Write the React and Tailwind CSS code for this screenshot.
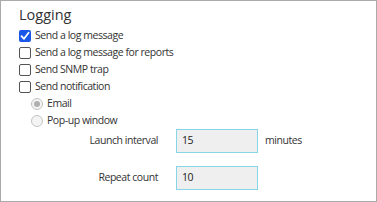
import React from "react";

function Checkbox({ checked }) {
  if (checked) {
    return (
      <span className="w-[12px] h-[12px] rounded-[2px] bg-[#1a56e8] flex items-center justify-center shrink-0">
        <svg width="10" height="10" viewBox="0 0 10 10">
          <path d="M1.5 5.2 L4 7.8 L8.6 1.8" fill="none" stroke="white" strokeWidth="1.8" strokeLinecap="round" strokeLinejoin="round" />
        </svg>
      </span>
    );
  }
  return <span className="w-[12px] h-[12px] rounded-[2px] border border-[#555] bg-white shrink-0" />;
}

function Radio({ checked }) {
  return (
    <span className="w-[12px] h-[12px] rounded-full border border-[#c4c4c4] bg-[#f4f4f4] flex items-center justify-center shrink-0">
      {checked && <span className="w-[6px] h-[6px] rounded-full bg-[#b0b0b0]" />}
    </span>
  );
}

export default function App() {
  const font = { fontFamily: '"Open Sans", "Liberation Sans", sans-serif' };
  return (
    <div
      className="w-[377px] h-[202px] border border-[#aaaaaa] bg-white pl-[18px] pt-[4px] text-[#333] box-border"
      style={font}
    >
      <div className="text-[14.5px] leading-[19px] text-[#333]">Logging</div>
      <div className="mt-[3px] flex flex-col text-[10.5px] tracking-[-0.45px]">
        {[
          ["Send a log message", true],
          ["Send a log message for reports", false],
          ["Send SNMP trap", false],
          ["Send notification", false],
        ].map(([t, c]) => (
          <div key={t} className="h-[17px] flex items-center gap-[4px]">
            <Checkbox checked={c} />
            <span>{t}</span>
          </div>
        ))}
        <div className="pl-[12px] flex flex-col">
          <div className="h-[17px] flex items-center gap-[4px]">
            <Radio checked />
            <span>Email</span>
          </div>
          <div className="h-[17px] flex items-center gap-[4px]">
            <Radio />
            <span>Pop-up window</span>
          </div>
        </div>
      </div>
      <div className="mt-0 flex flex-col gap-[13px] text-[10.5px] tracking-[-0.45px]">
        <div className="flex items-center">
          <span className="w-[139px] text-right">Launch interval</span>
          <div className="ml-[18px] w-[82px] h-[24px] border border-[#86d6e6] bg-[#efefef] flex items-center pl-[5px] text-[#222]">15</div>
          <span className="ml-[7px]">minutes</span>
        </div>
        <div className="flex items-center">
          <span className="w-[139px] text-right">Repeat count</span>
          <div className="ml-[18px] w-[82px] h-[24px] border border-[#86d6e6] bg-[#efefef] flex items-center pl-[5px] text-[#222]">10</div>
        </div>
      </div>
    </div>
  );
}
